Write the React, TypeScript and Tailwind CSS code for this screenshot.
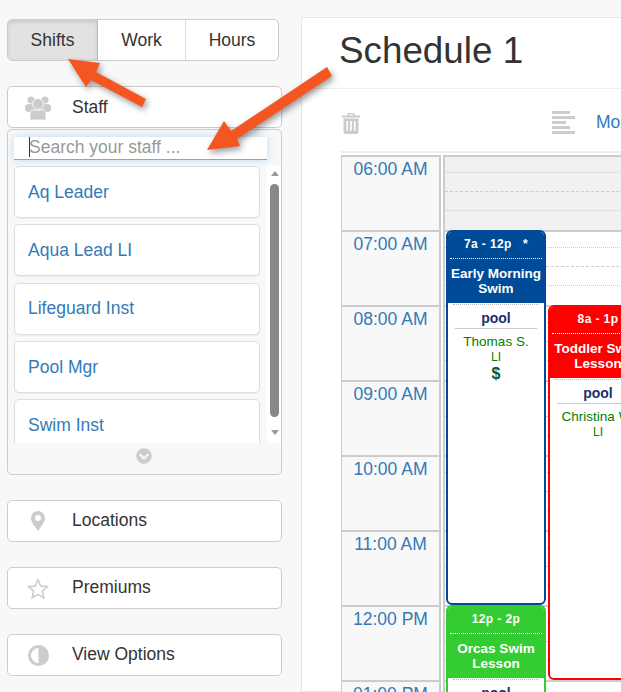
import { FaChevronCircleDown } from 'react-icons/fa';

const staff = ['Aq Leader', 'Aqua Lead LI', 'Lifeguard Inst', 'Pool Mgr', 'Swim Inst'];
const hours = ['06:00 AM', '07:00 AM', '08:00 AM', '09:00 AM', '10:00 AM', '11:00 AM', '12:00 PM', '01:00 PM'];

function UsersIcon() {
  return (
    <svg width="26" height="24" viewBox="0 0 26 24" fill="#cccccc">
      <circle cx="6" cy="4" r="3.500" />
      <circle cx="20" cy="4" r="3.500" />
      <rect x="0" y="8" width="26" height="8" rx="3.500" />
      <circle cx="13" cy="8" r="5.500" stroke="#ffffff" strokeWidth="0.8" />
      <path d="M5 17.500c0-3 2-3.500 4-3.500h8c2 0 4 .5 4 3.500V24H5z" stroke="#ffffff" strokeWidth="0.8" />
    </svg>
  );
}

function PinIcon() {
  return (
    <svg width="14" height="20" viewBox="0 0 14 20">
      <path fillRule="evenodd" fill="#cccccc" d="M7 0a7 7 0 0 1 7 7c0 3.500-3.500 8.500-7 13C3.500 15.500 0 10.500 0 7a7 7 0 0 1 7-7zm0 4a3 3 0 1 0 0 6 3 3 0 0 0 0-6z" />
    </svg>
  );
}

function StarIcon() {
  return (
    <svg width="22" height="21" viewBox="0 0 22 21" fill="none" stroke="#cccccc" strokeWidth="1.600">
      <path d="M11 1.800l2.800 6.200 6.600.7-5 4.500 1.400 6.600L11 16.400l-5.800 3.400 1.400-6.600-5-4.500 6.600-.7z" />
    </svg>
  );
}

function AdjustIcon() {
  return (
    <svg width="21" height="21" viewBox="0 0 21 21">
      <circle cx="10.500" cy="10.500" r="10.500" fill="#cccccc" />
      <path d="M10.500 3a7.500 7.500 0 0 0 0 15z" fill="#ffffff" />
    </svg>
  );
}

function TrashIcon() {
  return (
    <svg width="18" height="21" viewBox="0 0 18 21" fill="#cccccc">
      <path d="M6 0h6l1 2.500h5v2H0v-2h5zM7 1.500l-.4 1h4.800l-.4-1z" />
      <path fillRule="evenodd" d="M1.500 5.500h15V19a2 2 0 0 1-2 2h-11a2 2 0 0 1-2-2zM4.500 8v10H6V8zm3.700 0v10h1.600V8zM12 8v10h1.500V8z" />
    </svg>
  );
}

function AlignIcon() {
  return (
    <div className="flex flex-col gap-[2px]">
      <div className="w-[18px] h-[3px] bg-[#cccccc]" />
      <div className="w-[23px] h-[3px] bg-[#cccccc]" />
      <div className="w-[14px] h-[3px] bg-[#cccccc]" />
      <div className="w-[18px] h-[3px] bg-[#cccccc]" />
      <div className="w-[23px] h-[3px] bg-[#cccccc]" />
    </div>
  );
}

function SideButton({ icon, label, className }: { icon: React.ReactNode; label: string; className: string }) {
  return (
    <div className={`flex items-center h-[42px] bg-white border border-[#cccccc] rounded-[5px] text-[17.5px] text-[#333333] ${className}`}>
      <div className="w-[60px] mr-[4px] flex justify-center">{icon}</div>
      <span className="-mt-[1px]">{label}</span>
    </div>
  );
}

function Shift({ pos, color, time, title, role, name, pay, tall }: {
  pos: string; color: string; time: string; title: string[]; role: string; name: string; pay?: boolean; tall: string;
}) {
  return (
    <div className={`absolute w-[100px] ${pos} ${tall} bg-white border-2 rounded-[6px] overflow-hidden text-center`} style={{ borderColor: color }}>
      <div className="h-[71px] text-white font-bold" style={{ background: color }}>
        <div className="h-[27px] mx-[2px] pt-[3px] text-[12px] leading-[18px] tracking-[0.4px] border-b border-dotted border-white whitespace-pre">{time}</div>
        <div className="pt-[7px] text-[13.5px] leading-[15px] whitespace-nowrap">
          {title.map((t) => <div key={t}>{t}</div>)}
        </div>
      </div>
      <div className="mx-[5px] border-t border-dotted border-[#bbbbbb] mt-[1px]" />
      <div className="mx-[7px] pt-[5px] pb-[2px] text-[14px] leading-[16px] font-bold text-[#1a2f6b] border-b border-[#cccccc]">{role}</div>
      <div className="pt-[5px] text-[13.5px] leading-[16px] text-[#008000] whitespace-nowrap">{name}</div>
      <div className="text-[12px] leading-[14px] text-[#008000]">LI</div>
      {pay && <div className="mt-[1px] text-[16px] leading-[18px] font-bold text-[#14532d]">$</div>}
    </div>
  );
}

export default function App() {
  return (
    <div className="relative w-[621px] h-[692px] overflow-hidden bg-[#f8f8f8] flex font-['Liberation_Sans',Arial,sans-serif]">
      {/* sidebar */}
      <div className="w-[301px] shrink-0 pl-[7px] pt-[19px]">
        <div className="flex w-[272px] h-[42px] bg-white border border-[#cccccc] rounded-[5px] text-[17.5px] text-[#333333] overflow-hidden">
          <div className="w-[90px] flex items-center justify-center bg-[#e2e2e2] shadow-[inset_0_2px_4px_rgba(0,0,0,0.12)] border-r border-[#bbbbbb]">Shifts</div>
          <div className="w-[88px] flex items-center justify-center border-r border-[#dddddd]">Work</div>
          <div className="flex-1 flex items-center justify-center">Hours</div>
        </div>

        <SideButton className="w-[275px] mt-[25px] pt-[2px]" icon={<UsersIcon />} label="Staff" />

        <div className="relative w-[275px] h-[346px] mt-[1px] border border-[#cccccc] rounded-[5px]">
          <div className="ml-[6px] mt-[7px] w-[253px] h-[23px] bg-white border-b border-[#66afe9] shadow-[0_0_8px_rgba(102,175,233,0.4)] pl-[15px] text-[17.5px] leading-[21px] text-[#999999] flex">
            <span className="w-px h-[20px] bg-[#333333] mr-[-1px]" />
            <span>Search your staff ...</span>
          </div>
          <div className="ml-[6px] mt-[6px] h-[277px] flex overflow-hidden">
            <div className="w-[246px] flex flex-col gap-[6.25px] shrink-0">
              {staff.map((s) => (
                <div key={s} className="h-[52px] shrink-0 bg-white border border-[#dddddd] rounded-[5px] shadow-[0_1px_1px_rgba(0,0,0,0.05)] pl-[13px] text-[17.5px] text-[#337ab7] flex items-center">
                  {s}
                </div>
              ))}
            </div>
            <div className="ml-[6px] w-[15px] bg-white flex flex-col items-center pl-[2px]">
              <div className="mt-[5px] w-0 h-0 border-x-[4px] border-x-transparent border-b-[5px] border-b-[#999999]" />
              <div className="mt-[8px] w-[9px] h-[233px] rounded-[5px] bg-[#888888]" />
              <div className="mt-[13px] w-0 h-0 border-x-[4px] border-x-transparent border-t-[5px] border-t-[#999999]" />
            </div>
          </div>
          <div className="flex justify-center pt-[5px] pr-[2px] text-[#cccccc] text-[16px]">
            <FaChevronCircleDown />
          </div>
        </div>

        <SideButton className="w-[275px] mt-[25px]" icon={<PinIcon />} label="Locations" />
        <SideButton className="w-[275px] mt-[25px]" icon={<StarIcon />} label="Premiums" />
        <SideButton className="w-[275px] mt-[25px]" icon={<AdjustIcon />} label="View Options" />
      </div>

      {/* main panel */}
      <div className="mt-[17px] w-[400px] shrink-0 bg-white border border-[#e7e7e7] pl-[39px]">
        <div className="-ml-[39px] pl-[37px] h-[71px] border-b border-[#eeeeee] text-[36.8px] leading-[40px] pt-[13px] text-[#333333]">Schedule 1</div>
        <div className="h-[65px] pt-[5px] flex items-center border-b-2 border-[#eeeeee] -mt-px">
          <div className="ml-[1px] w-[210px] pt-[2px]"><TrashIcon /></div>
          <AlignIcon />
          <span className="ml-[21px] text-[17.5px] text-[#337ab7]">Month</span>
        </div>
        <div className="flex mt-[2px]">
          <div className="w-[100px] shrink-0">
            {hours.map((h) => (
              <div key={h} className="h-[75px] box-border bg-[#f8f8f8] border-l border-t-2 border-r-2 border-[#cccccc] text-center text-[17.5px] leading-[21px] text-[#337ab7] pt-[2px]">
                {h}
              </div>
            ))}
          </div>
          <div className="relative flex-1 ml-[2px] border-l-2 border-[#cccccc]">
            {hours.map((h, i) => (
              <div key={h} className={`h-[75px] border-t-2 border-[#cccccc] pt-[15px] ${i === 0 ? 'bg-[#f1f1f1]' : 'bg-white'}`}>
                <div className="h-[19px] border-t border-dotted border-[#cccccc]" />
                <div className="h-[19px] border-t border-dashed border-[#cccccc]" />
                <div className="border-t border-dotted border-[#cccccc]" />
              </div>
            ))}
            <Shift pos="left-[1px] top-[75px]" tall="h-[375px]" color="#004b97" time={'7a - 12p   *'} title={['Early Morning', 'Swim']} role="pool" name="Thomas S." pay />
            <Shift pos="left-[103px] top-[150px]" tall="h-[375px]" color="#ff0000" time="8a - 1p" title={['Toddler Swim', 'Lesson']} role="pool" name="Christina W." />
            <Shift pos="left-[1px] top-[450px]" tall="h-[150px]" color="#33cc33" time="12p - 2p" title={['Orcas Swim', 'Lesson']} role="pool" name="" />
          </div>
        </div>
      </div>

      {/* annotation arrows */}
      <svg className="absolute left-0 top-0 pointer-events-none" width="621" height="692" style={{ filter: 'drop-shadow(2px 3px 3px rgba(0,0,0,0.4))' }}>
        <path fill="#f55520" d="M68 59L100 63L96 72L146 99L142 107L91 80L86 87z" />
        <path fill="#f55520" d="M207 150L224 121L231 131L327 67L332 76L237 139L240 146z" />
      </svg>
    </div>
  );
}
